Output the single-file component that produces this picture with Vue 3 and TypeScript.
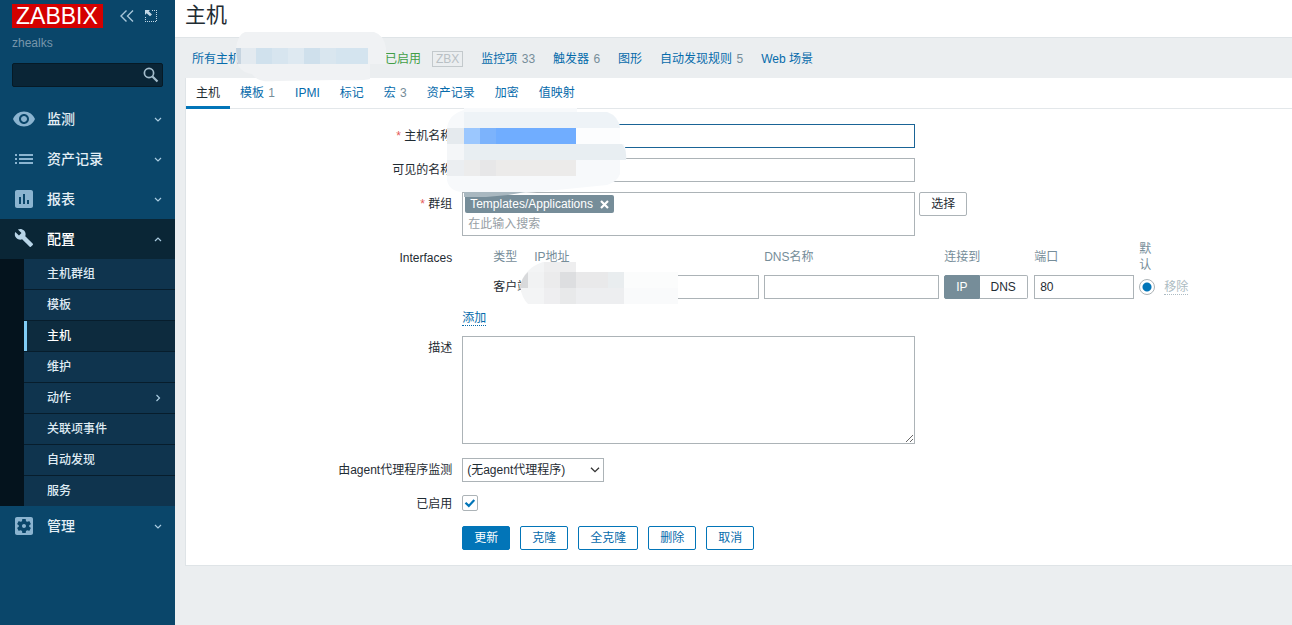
<script setup lang="ts">
import { ref } from 'vue'

interface MenuItem {
  label: string
  icon: string
  children?: { label: string; current?: boolean; nested?: boolean }[]
}

const menu: MenuItem[] = [
  { label: '监测', icon: 'eye' },
  { label: '资产记录', icon: 'list' },
  { label: '报表', icon: 'report' },
  {
    label: '配置',
    icon: 'wrench',
    children: [
      { label: '主机群组' },
      { label: '模板' },
      { label: '主机', current: true },
      { label: '维护' },
      { label: '动作', nested: true },
      { label: '关联项事件' },
      { label: '自动发现' },
      { label: '服务' },
    ],
  },
  { label: '管理', icon: 'gear' },
]

const links: { label: string; count?: number }[] = [
  { label: '监控项', count: 33 },
  { label: '触发器', count: 6 },
  { label: '图形' },
  { label: '自动发现规则', count: 5 },
  { label: 'Web 场景' },
]

const tabs: { label: string; count?: number }[] = [
  { label: '主机' },
  { label: '模板', count: 1 },
  { label: 'IPMI' },
  { label: '标记' },
  { label: '宏', count: 3 },
  { label: '资产记录' },
  { label: '加密' },
  { label: '值映射' },
]

const activeTab = ref(0)
const search = ref('')
const hostName = ref('')
const visibleName = ref('')
const groupSearch = ref('')
const ipAddress = ref('')
const dnsName = ref('')
const connectTo = ref<'IP' | 'DNS'>('IP')
const port = ref('80')
const description = ref('')
const enabled = ref(true)
</script>

<template>
  <div class="layout">
    <aside class="sidebar">
      <div class="brand">
        <a href="#" class="logo">ZABBIX</a>
        <button type="button" class="icon-button" aria-label="Collapse sidebar">
          <svg width="14" height="12" viewBox="0 0 14 12" fill="none" stroke="#a9c6d9" stroke-width="1.4">
            <path d="M6.5 .5 1 6l5.500 5.500M13 .5 7.500 6 13 11.500" />
          </svg>
        </button>
        <button type="button" class="icon-button" aria-label="Hide sidebar">
          <svg width="12" height="12" viewBox="0 0 12 12" fill="none" stroke="#c3d8e6">
            <path d="M7 .5h5M11.500 2v10M0 11.500h11M.5 7v4" stroke-dasharray="1 1" />
            <path d="M0 0h5L3.700 1.300 7 4.600 5 6.200 1.600 3.200 0 5z" fill="#c3d8e6" stroke="none" />
          </svg>
        </button>
      </div>
      <div class="server">zhealks</div>
      <form class="search" @submit.prevent>
        <input v-model="search" type="text" aria-label="Search" />
        <button type="submit" aria-label="Search">
          <svg width="16" height="16" viewBox="0 0 16 16" fill="none" stroke="#a3bccb">
            <circle cx="6" cy="6" r="4.600" stroke-width="1.700" />
            <path d="m9.500 9.500 5 5" stroke-width="2.200" />
          </svg>
        </button>
      </form>

      <nav>
        <ul class="menu">
          <li v-for="item in menu" :key="item.label" :class="{ open: item.children }">
            <a href="#" class="menu-link">
              <svg class="menu-icon" width="24" height="24" viewBox="0 0 24 24">
                <path
                  v-if="item.icon === 'eye'"
                  d="M12 4.500C7 4.500 2.730 7.610 1 12c1.730 4.390 6 7.500 11 7.500s9.270-3.110 11-7.500c-1.730-4.390-6-7.500-11-7.500zM12 17c-2.760 0-5-2.240-5-5s2.240-5 5-5 5 2.240 5 5-2.240 5-5 5zm0-8c-1.660 0-3 1.340-3 3s1.340 3 3 3 3-1.340 3-3-1.340-3-3-3z"
                />
                <path
                  v-else-if="item.icon === 'list'"
                  d="M3 7h2v2H3zm4 0h14v2H7zM3 11h2v2H3zm4 0h14v2H7zM3 15h2v2H3zm4 0h14v2H7z"
                />
                <path
                  v-else-if="item.icon === 'report'"
                  d="M19 3H5c-1.100 0-2 .9-2 2v14c0 1.100.9 2 2 2h14c1.100 0 2-.9 2-2V5c0-1.100-.9-2-2-2zM9 17H7v-7h2v7zm4 0h-2V7h2v10zm4 0h-2v-4h2v4z"
                />
                <path
                  v-else-if="item.icon === 'wrench'"
                  transform="translate(2 1) scale(.83)"
                  d="M22.700 19l-9.100-9.100c.9-2.300.4-5-1.500-6.900-2-2-5-2.400-7.400-1.300L9 6 6 9 1.600 4.700C.4 7.100.9 10.100 2.900 12.100c1.900 1.900 4.600 2.400 6.900 1.500l9.100 9.100c.4.4 1 .4 1.400 0l2.300-2.300c.5-.4.5-1.100.1-1.400z"
                />
                <path
                  v-else
                  d="M12 10c-1.100 0-2 .9-2 2s.9 2 2 2 2-.9 2-2-.9-2-2-2zm7-7H5c-1.110 0-2 .9-2 2v14c0 1.100.89 2 2 2h14c1.110 0 2-.9 2-2V5c0-1.100-.89-2-2-2zm-1.750 9c0 .23-.02.46-.05.68l1.480 1.160c.13.11.17.3.08.45l-1.400 2.420c-.09.15-.27.21-.43.15l-1.740-.7c-.36.28-.76.51-1.180.69l-.26 1.850c-.03.17-.18.3-.35.3h-2.800c-.17 0-.32-.13-.35-.29l-.26-1.850c-.43-.18-.82-.41-1.180-.69l-1.740.7c-.16.06-.34 0-.43-.15l-1.400-2.420c-.09-.15-.05-.34.08-.45l1.480-1.160c-.03-.23-.05-.46-.05-.69 0-.23.02-.46.05-.68l-1.480-1.160c-.13-.11-.17-.3-.08-.45l1.400-2.420c.09-.15.27-.21.43-.15l1.740.7c.36-.28.76-.51 1.180-.69l.26-1.850c.03-.17.18-.3.35-.3h2.800c.17 0 .32.13.35.29l.26 1.850c.43.18.82.41 1.180.69l1.740-.7c.16-.06.34 0 .43.15l1.400 2.420c.09.15.05.34-.08.45l-1.480 1.160c.03.23.05.46.05.69z"
                />
              </svg>
              <span>{{ item.label }}</span>
              <svg class="chevron" width="8" height="8" viewBox="0 0 8 8">
                <path :d="item.children ? 'M1 6l3-3 3 3' : 'M1 3l3 3 3-3'" />
              </svg>
            </a>
            <ul v-if="item.children" class="submenu">
              <li v-for="child in item.children" :key="child.label">
                <a href="#" :class="{ current: child.current }">
                  <span>{{ child.label }}</span>
                  <svg v-if="child.nested" class="chevron" width="8" height="8" viewBox="0 0 8 8">
                    <path d="M2.500 1l3 3-3 3" />
                  </svg>
                </a>
              </li>
            </ul>
          </li>
        </ul>
      </nav>
    </aside>

    <main class="main">
      <header class="page-header"><h1>主机</h1></header>

      <nav class="host-nav">
        <span class="crumb">
          <a href="#">所有主机</a>
          <svg class="mask mask-crumb" width="150" height="50" viewBox="0 0 150 50">
            <path d="M0 16Q2 2 9 0H138Q148 3 150 16V32H134V47Q128 49 100 48L40 49Q22 51 16 42Q1 40 0 24z" fill="#f0f2f4" />
            <path d="M0 16h5v16H2Q0 24 0 16z" fill="#c6d4e0" />
            <path d="M5 16h15v16H5z" fill="#e3eaf0" />
            <path d="M20 16h16v16H20z" fill="#d0e1ed" />
            <path d="M36 16h16v16H36z" fill="#d7e5ef" />
            <path d="M52 16h16v16H52z" fill="#dee9f1" />
            <path d="M68 16h16v16H68z" fill="#cfe0ec" />
            <path d="M84 16h16v16H84z" fill="#d9e6ef" />
            <path d="M100 16h32v16h-32z" fill="#d4e4ef" />
          </svg>
        </span>
        <span class="status">已启用</span>
        <span class="zbx">ZBX</span>
        <span v-for="link in links" :key="link.label" class="nav-link">
          <a href="#">{{ link.label }}</a><span v-if="link.count" class="count">&nbsp;{{ link.count }}</span>
        </span>
      </nav>

      <section class="panel">
        <div class="tabs" role="tablist">
          <button
            v-for="(tab, i) in tabs"
            :key="tab.label"
            type="button"
            role="tab"
            :aria-selected="activeTab === i"
            :class="{ active: activeTab === i }"
            @click="activeTab = i"
          >
            {{ tab.label }}<span v-if="tab.count" class="count">&nbsp;{{ tab.count }}</span>
          </button>
        </div>

        <form class="form" @submit.prevent>
          <label class="label required" for="host">主机名称</label>
          <div class="field anchor">
            <input id="host" v-model="hostName" class="wide focused" type="text" />
            <svg class="mask mask-name" width="180" height="89" viewBox="0 0 180 89">
              <path d="M0 20Q2 6 17 2V0H130V4H160Q172 8 173 20V36H177Q180 42 179 52H173V66Q170 74 160 77L90 84 17 89V84Q2 84 0 72z" fill="#f7f9fb" />
              <path d="M17 4h143q11 4 13 16H17z" fill="#eef3f7" />
              <path d="M0 20h17v16H0z" fill="#e5eaee" />
              <path d="M0 36h17v16H0z" fill="#f4f6f8" />
              <path d="M0 52h17v16H0z" fill="#ebeef1" />
              <path d="M17 20h16v16H17z" fill="#9bc7fe" />
              <path d="M33 20h16v16H33z" fill="#7cb3fc" />
              <path d="M49 20h80v16H49z" fill="#70adff" />
              <path d="M129 20h44v16h-44z" fill="#fcfdfe" />
              <path d="M17 36h158q5 6 4 16H17z" fill="#e8eef2" />
              <path d="M17 52h16v16H17z" fill="#ececec" />
              <path d="M33 52h16v16H33z" fill="#e7e7e8" />
              <path d="M49 52h80v16H49z" fill="#ecebea" />
              <path d="M17 84h62l-18 3-44 4z" fill="#a9b8c0" />
            </svg>
          </div>

          <label class="label" for="visible">可见的名称</label>
          <div class="field"><input id="visible" v-model="visibleName" class="wide" type="text" /></div>

          <label class="label required" for="groups">群组</label>
          <div class="field group-field">
            <div class="multiselect wide">
              <span class="tag">
                Templates/Applications
                <button type="button" aria-label="Remove Templates/Applications">
                  <svg width="9" height="9" viewBox="0 0 9 9"><path d="m1 1 7 7M8 1 1 8" stroke="#fff" stroke-width="2.200" /></svg>
                </button>
              </span>
              <input id="groups" v-model="groupSearch" type="text" placeholder="在此输入搜索" />
            </div>
            <button type="button" class="btn grey">选择</button>
          </div>

          <span class="label">Interfaces</span>
          <div class="field anchor interfaces-field">
            <table class="interfaces">
              <colgroup>
                <col class="c-type" /><col class="c-ip" /><col class="c-dns" /><col class="c-connect" />
                <col class="c-port" /><col class="c-default" /><col class="c-action" />
              </colgroup>
              <thead>
                <tr>
                  <th>类型</th><th>IP地址</th><th>DNS名称</th><th>连接到</th><th>端口</th>
                  <th class="narrow">默认</th><th></th>
                </tr>
              </thead>
              <tbody>
                <tr>
                  <td class="type">客户端</td>
                  <td><input v-model="ipAddress" type="text" aria-label="IP地址" /></td>
                  <td><input v-model="dnsName" type="text" aria-label="DNS名称" /></td>
                  <td>
                    <div class="segmented">
                      <button type="button" :class="{ on: connectTo === 'IP' }" @click="connectTo = 'IP'">IP</button>
                      <button type="button" :class="{ on: connectTo === 'DNS' }" @click="connectTo = 'DNS'">DNS</button>
                    </div>
                  </td>
                  <td><input v-model="port" type="text" aria-label="端口" /></td>
                  <td><input class="radio" type="radio" name="default" checked aria-label="默认" /></td>
                  <td><button type="button" class="link-button" disabled>移除</button></td>
                </tr>
              </tbody>
            </table>
            <button type="button" class="link-button add">添加</button>
            <svg class="mask mask-ip" width="158" height="42" viewBox="0 0 158 42">
              <path d="M0 25Q4 6 23 0H56V10H158V42H8Q2 36 0 25z" fill="#f3f4f5" />
              <path d="M0 26Q1 16 8 10V26z" fill="#d8d9db" />
              <path d="M24 0h32v10H24z" fill="#eeeeef" />
              <path d="M8 10h16v16H8z" fill="#f1f2f3" />
              <path d="M24 10h16v16H24z" fill="#ebebec" />
              <path d="M40 10h16v16H40z" fill="#dddee0" />
              <path d="M56 10h32v16H56z" fill="#e9e9ea" />
              <path d="M88 10h16v16H88z" fill="#e9edef" />
              <path d="M104 10h54v16h-54z" fill="#fbfcfc" />
              <path d="M24 26h16v16H24z" fill="#eeeef0" />
              <path d="M40 26h16v16H40z" fill="#e8e9ea" />
              <path d="M56 26h48v16H56z" fill="#edeef0" />
              <path d="M104 26h54v16h-54z" fill="#f9fafb" />
            </svg>
          </div>

          <label class="label" for="description">描述</label>
          <div class="field"><textarea id="description" v-model="description" class="wide"></textarea></div>

          <label class="label proxy-row" for="proxy">由agent代理程序监测</label>
          <div class="field proxy-row">
            <div class="select">
              <select id="proxy"><option>(无agent代理程序)</option></select>
              <svg width="10" height="6" viewBox="0 0 10 6" fill="none" stroke="#333" stroke-width="1.300">
                <path d="m1 .7 4 4 4-4" />
              </svg>
            </div>
          </div>

          <label class="label" for="enabled">已启用</label>
          <div class="field check-field">
            <span class="check">
              <input id="enabled" v-model="enabled" type="checkbox" />
              <svg v-if="enabled" width="16" height="16" viewBox="0 0 16 16" fill="none" stroke="#0275b8" stroke-width="2.200">
                <path d="m3.500 7.700 3.300 3.200 5.500-5.800" />
              </svg>
            </span>
          </div>

          <div class="actions">
            <button type="submit" class="btn primary">更新</button>
            <button type="button" class="btn">克隆</button>
            <button type="button" class="btn">全克隆</button>
            <button type="button" class="btn">删除</button>
            <button type="button" class="btn">取消</button>
          </div>
        </form>
      </section>
    </main>
  </div>
</template>

<style>
body {
  background: #ebeef0;
}
</style>

<style scoped>
.layout,
.layout * {
  box-sizing: border-box;
}

.layout {
  display: flex;
  min-height: 100vh;
  overflow: hidden;
  color: #1f2c33;
  font-family: "Liberation Sans", "Noto Sans CJK SC", sans-serif;
  font-size: 12px;
  line-height: 16px;
}

.layout input,
.layout button,
.layout select,
.layout textarea {
  margin: 0;
  font: inherit;
  color: inherit;
}

button {
  cursor: pointer;
}

a {
  color: #066bab;
  text-decoration: none;
}

/* Sidebar */
.sidebar {
  flex: none;
  width: 175px;
  background: #0a466a;
}

.brand {
  display: flex;
  align-items: center;
  padding: 4px 12px 0;
}

.logo {
  margin-right: 17px;
  padding: 0 5px 0 4px;
  background: #d40000;
  color: #fff;
  font-size: 23px;
  line-height: 24px;
}

.icon-button {
  display: flex;
  width: 25px;
  padding: 0;
  border: 0;
  background: none;
}

.icon-button:last-child {
  width: 12px;
}

.server {
  padding: 7px 12px 0;
  color: #7796ab;
}

.search {
  display: flex;
  align-items: center;
  height: 24px;
  margin: 12px;
  border: 1px solid #061a26;
  border-radius: 2px;
  background: #0a2536;
}

.search input[type="text"] {
  flex: 1;
  min-width: 0;
  padding: 0 8px;
  border: 0;
  background: none;
  color: #fff;
}

.search button {
  display: flex;
  padding: 0 3px;
  border: 0;
  background: none;
}

.menu,
.submenu {
  margin: 0;
  padding: 0;
  list-style: none;
}

.menu-link {
  display: flex;
  align-items: center;
  gap: 11px;
  height: 40px;
  padding: 0 13px 0 12px;
  color: #e4eff6;
  font-size: 14px;
  font-weight: 500;
}

.menu-icon {
  fill: #8bb4d0;
}

.chevron {
  margin-left: auto;
  fill: none;
  stroke: #a9cbe0;
  stroke-width: 1.2px;
}

.open .menu-link {
  background: #0a2636;
  color: #fff;
}

.open .menu-icon {
  fill: #b8d5e8;
}

.submenu {
  border-left: 24px solid #04131d;
  background: #0f344e;
}

.submenu li + li {
  border-top: 1px solid #071d2c;
}

.submenu a {
  display: flex;
  align-items: center;
  height: 30px;
  padding: 0 13px 0 20px;
  border-left: 3px solid transparent;
  color: #dfebf3;
  font-weight: 500;
}

.submenu a.current {
  border-left-color: #80ccf5;
  background: #0d2b3e;
  color: #fff;
}

/* Page */
.main {
  flex: 1;
  min-width: 0;
}

.page-header {
  height: 38px;
  padding: 0 10px;
  border-bottom: 1px solid #dfe4e7;
  background: #fff;
}

h1 {
  margin: 0;
  font-size: 21px;
  font-weight: 400;
  line-height: 29px;
}

.host-nav {
  display: flex;
  align-items: center;
  gap: 18px;
  height: 40px;
  padding: 1px 17px 0;
  white-space: nowrap;
}

.crumb {
  position: relative;
  width: 175px;
}

.status {
  color: #429e47;
}

.zbx {
  margin-left: -7px;
  padding: 0 3px;
  border: 1px solid #c3c9cc;
  color: #b9c0c4;
  line-height: 14px;
}

.count {
  margin-left: 1px;
  color: #768d99;
}

.panel {
  margin-left: 10px;
  border: 1px solid #dfe4e7;
  border-right: 0;
  border-top: 0;
  background: #fff;
}

.tabs {
  display: flex;
  height: 31px;
  border-bottom: 1px solid #e3e7ea;
}

.tabs button {
  height: 31px;
  padding: 2px 10px 0;
  border: 0;
  border-bottom: 3px solid transparent;
  background: none;
}

.layout .tabs button {
  color: #066bab;
}

.layout .tabs button.active {
  border-bottom-color: #0275b8;
  color: #1f2c33;
}

.form {
  display: grid;
  grid-template-columns: 24% 1fr;
  gap: 10px;
  padding: 15px 0 15px 1px;
}

.label {
  padding-top: 4px;
  text-align: right;
}

.required::before {
  content: "* ";
  color: #e45959;
}

.anchor {
  position: relative;
}

.field {
  min-width: 0;
}

input[type="text"],
textarea {
  border: 1px solid #acb3b7;
  outline: 0;
  background: #fff;
}

.field input[type="text"] {
  display: block;
  height: 24px;
  padding: 0 5px;
}

.field .wide {
  width: 453px;
  max-width: 100%;
}

.field input[type="text"].focused {
  border-color: #1a6496;
}

.group-field {
  display: flex;
  align-items: flex-start;
  gap: 4px;
}

.multiselect {
  display: flex;
  flex-direction: column;
  align-items: flex-start;
  height: 44px;
  padding: 2px;
  border: 1px solid #acb3b7;
}

.tag {
  display: flex;
  align-items: center;
  gap: 7px;
  padding: 1px 5px;
  border-radius: 2px;
  background: #768d99;
  color: #fff;
}

.tag button {
  display: flex;
  padding: 0;
  border: 0;
  background: none;
}

.multiselect input[type="text"] {
  flex: 1;
  width: 100%;
  min-height: 22px;
  padding: 0 3px;
  border: 0;
}

.multiselect input::placeholder {
  color: #97a0a5;
  opacity: 1;
}

.btn {
  height: 24px;
  padding: 0 11px;
  border: 1px solid #0275b8;
  border-radius: 2px;
  background: #fff;
}

.layout .btn {
  color: #066bab;
}

.layout .btn.grey {
  border-color: #acb3b7;
  color: #1f2c33;
}

.layout .btn.primary {
  background: #0275b8;
  color: #fff;
}

/* Interfaces */
.interfaces-field {
  margin-top: -5px;
}

.interfaces {
  width: 100%;
  max-width: 735px;
  table-layout: fixed;
  border-collapse: collapse;
}

.c-type { width: 72px; }
.c-ip { width: 230px; }
.c-dns { width: 180px; }
.c-connect { width: 90px; }
.c-port { width: 105px; }
.c-default { width: 25px; }

.interfaces th,
.interfaces td {
  padding: 0 5px 0 0;
  text-align: left;
}

.interfaces th {
  color: #768d99;
  font-weight: 400;
}

.interfaces td {
  padding-top: 2px;
  white-space: nowrap;
}

.interfaces tr > :first-child {
  padding-left: 31px;
}

.interfaces th.narrow {
  padding-right: 11px;
}

.interfaces tr > :last-child {
  padding-right: 0;
}

.interfaces input[type="text"] {
  width: 100%;
}

.segmented {
  display: flex;
}

.segmented button {
  height: 24px;
  padding: 0 11px;
  border: 1px solid #acb3b7;
  border-left: 0;
  border-radius: 0 2px 2px 0;
  background: #fff;
}

.layout .segmented button.on {
  border-color: #768d99;
  background: #768d99;
  color: #fff;
}

.segmented button:first-child {
  border-left: 1px solid #acb3b7;
  border-radius: 2px 0 0 2px;
}

.radio {
  display: block;
  width: 16px;
  height: 16px;
  appearance: none;
  border: 1px solid #acb3b7;
  border-radius: 50%;
  background: radial-gradient(circle, #0275b8 4px, #fff 5px);
}

.link-button {
  padding: 0;
  border: 0;
  border-bottom: 1px dotted;
  background: none;
}

.layout .link-button {
  color: #066bab;
  line-height: 14px;
}

.layout .link-button:disabled {
  color: #acbbc2;
}

.layout .add {
  display: block;
  margin-top: 12px;
}

textarea {
  display: block;
  height: 108px;
  padding: 4px;
}

.proxy-row {
  margin-top: 4px;
}

.select {
  position: relative;
  width: 142px;
}

.select select {
  width: 100%;
  height: 24px;
  padding: 0 20px 0 4px;
  appearance: none;
  border: 1px solid #acb3b7;
  border-radius: 0;
  background: #fff;
}

.select svg {
  position: absolute;
  right: 4px;
  top: 9px;
  pointer-events: none;
}

.check-field {
  padding: 3px 0 2px;
}

.check {
  position: relative;
  display: block;
  width: 16px;
  height: 16px;
}

.check input {
  display: block;
  width: 16px;
  height: 16px;
  appearance: none;
  border: 1px solid #acb3b7;
  border-radius: 2px;
  background: #fff;
}

.check svg {
  position: absolute;
  inset: 0;
  pointer-events: none;
}

.actions {
  display: flex;
  grid-column: 2;
  gap: 10px;
  padding-top: 3px;
}

/* Redaction overlays */
.mask {
  position: absolute;
  z-index: 1;
  pointer-events: none;
}

.mask-crumb {
  left: 44px;
  top: -19px;
}

.mask-name {
  left: -15px;
  top: -16px;
}

.mask-ip {
  left: 58px;
  top: 21px;
}
</style>
